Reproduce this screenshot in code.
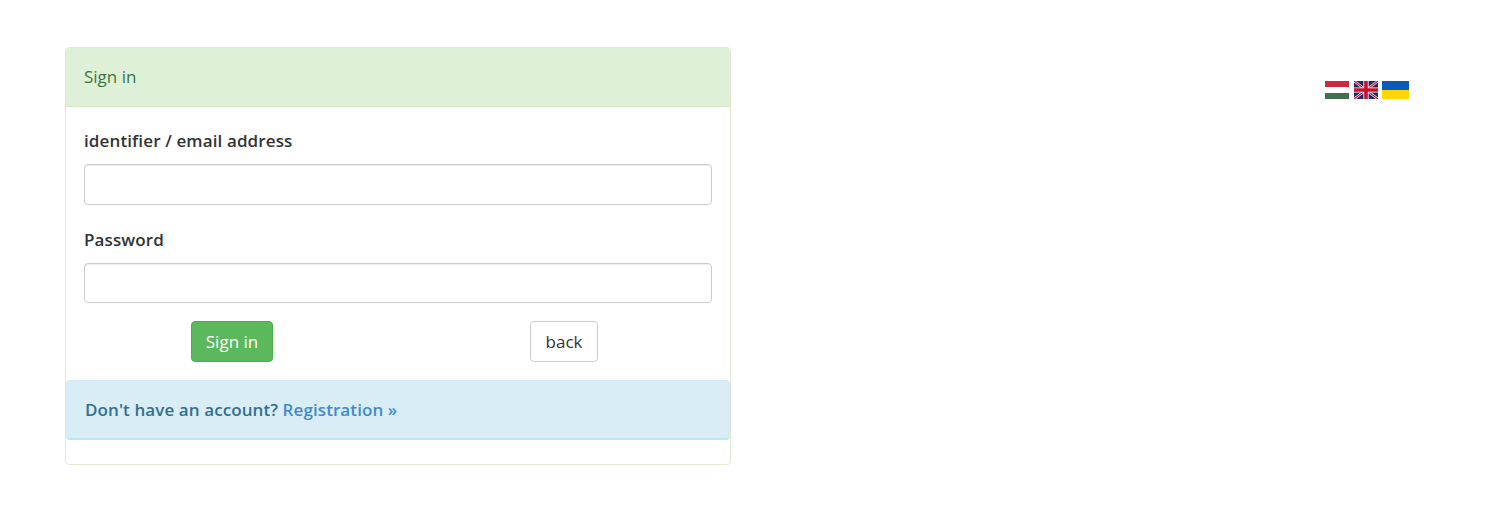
<div class="page">
  <section class="panel">
    <header class="head">Sign in</header>
    <div class="body">
      <form class="form" onsubmit={(e) => e.preventDefault()}>
        <div class="group first">
          <label for="id">identifier / email address</label>
          <input id="id" class="tall" type="text" />
        </div>
        <div class="group second">
          <label for="pw">Password</label>
          <input id="pw" type="password" />
        </div>
        <div class="actions">
          <div class="cell"><button class="btn success" type="submit">Sign in</button></div>
          <div class="cell"><button class="btn plain" type="button">back</button></div>
        </div>
      </form>
      <div class="alert"><strong>Don't have an account? <a href="#reg">Registration »</a></strong></div>
    </div>
  </section>
  <div class="flags">
    <svg class="flag" width="24" height="18" viewBox="0 0 24 18" aria-label="Magyar">
      <rect width="24" height="18" fill="#fff" />
      <rect width="24" height="6" fill="#cd2a3e" />
      <rect y="12" width="24" height="6" fill="#436f4d" />
    </svg>
    <svg class="flag uk" width="24" height="18" viewBox="0 0 60 45" aria-label="English">
      <rect width="60" height="45" fill="#1f2a6b" />
      <path d="M0 0L60 45M60 0L0 45" stroke="#fff" stroke-width="6" />
      <path d="M0 0L60 45M60 0L0 45" stroke="#c8102e" stroke-width="3" />
      <path d="M30 0V45M0 22.5H60" stroke="#fff" stroke-width="13" />
      <path d="M30 0V45M0 22.5H60" stroke="#c8102e" stroke-width="9" />
    </svg>
    <svg class="flag" width="27" height="18" viewBox="0 0 27 18" aria-label="Українська">
      <rect width="27" height="9" fill="#0a5ab8" />
      <rect y="9" width="27" height="9" fill="#ffd500" />
    </svg>
  </div>
</div>

<style>
  :global(body) {
    margin: 0;
    background: #fff;
    font-family: "Open Sans", "Liberation Sans", sans-serif;
    font-size: 17px;
    line-height: 22px;
    color: #333;
  }
  .page {
    display: flex;
    justify-content: space-between;
    align-items: flex-start;
    padding: 47px 88px 60px 65px;
  }
  .panel {
    box-sizing: border-box;
    width: 666px;
    height: 418px;
    border: 1px solid #e1e9d3;
    border-radius: 4px;
    overflow: hidden;
  }
  .head {
    box-sizing: border-box;
    height: 59px;
    padding: 18px 18px;
    background: #dff0d8;
    border-bottom: 1px solid #d6e9c6;
    color: #3c763d;
  }
  .form {
    display: block;
    padding: 23px 18px 0;
  }
  .group {
    display: flex;
    flex-direction: column;
  }
  .second {
    margin-top: 24px;
  }
  label {
    font-weight: 600;
    font-size: 17px;
    letter-spacing: 0.12px;
    line-height: 22px;
    margin-bottom: 12px;
    color: #333;
  }
  input {
    box-sizing: border-box;
    width: 100%;
    height: 40px;
    border: 1px solid #ccc;
    border-radius: 4px;
    background: #fff;
    box-shadow: inset 0 1px 1px rgba(0, 0, 0, 0.075);
    outline: none;
  }
  input.tall {
    height: 41px;
  }
  .actions {
    display: grid;
    grid-template-columns: 296px 296px;
    gap: 36px;
    margin-top: 18px;
  }
  .cell {
    display: flex;
    justify-content: center;
  }
  .btn {
    box-sizing: border-box;
    height: 41px;
    padding: 0 14px;
    border-radius: 4px;
    font: inherit;
    line-height: 22px;
  }
  .success {
    background: #5cb85c;
    border: 1px solid #4cae4c;
    color: #fff;
  }
  .plain {
    padding: 0 15px;
    background: #fff;
    border: 1px solid #ccc;
    color: #333;
  }
  .alert {
    box-sizing: border-box;
    height: 60px;
    margin-top: 18px;
    padding: 18px;
    background: #d9edf7;
    border: 1px solid #d2eaf5;
    border-bottom: 2px solid #bce8f1;
    border-radius: 4px;
    color: #31708f;
  }
  .alert strong {
    font-weight: 600;
    font-size: 17px;
    letter-spacing: 0.09px;
  }
  .alert a {
    color: #428bca;
    text-decoration: none;
  }
  .flags {
    display: flex;
    gap: 4px;
    margin-top: 34px;
  }
  .flag.uk {
    margin-left: 1px;
  }
  .flag {
    display: block;
  }
</style>
